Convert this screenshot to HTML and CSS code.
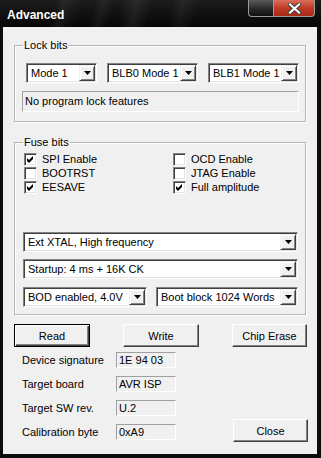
FILE: index.html
```html
<!DOCTYPE html>
<html lang="en">
<head>
    <meta charset="UTF-8">
    <title>Advanced</title>
    <link rel="stylesheet" href="styles.css">
</head>
<body>
    <div class="window">
        <div class="titlebar">
            <span class="title">Advanced</span>
            <div class="caption-buttons">
                <span class="cap-btn cap-blank"></span>
                <span class="cap-btn cap-close">
                    <svg width="13" height="11" viewBox="0 0 13 11">
                        <path d="M2 1.5 L11 9.5 M11 1.5 L2 9.5" stroke="#3a3a3a" stroke-width="4.2" stroke-linecap="square"/>
                        <path d="M2 1.5 L11 9.5 M11 1.5 L2 9.5" stroke="#fff" stroke-width="2.2" stroke-linecap="square"/>
                    </svg>
                </span>
            </div>
        </div>
        <div class="frame">
            <div class="client">
                <fieldset class="group lock-group">
                    <legend>Lock bits</legend>
                    <div class="combo-row lock-row">
                        <div class="combo w-mode"><span class="combo-text">Mode 1</span><span class="combo-arrow"><svg width="7" height="4"><polygon points="0,0 7,0 3.5,4" fill="#000"/></svg></span></div>
                        <div class="combo w-blb"><span class="combo-text">BLB0 Mode 1</span><span class="combo-arrow"><svg width="7" height="4"><polygon points="0,0 7,0 3.5,4" fill="#000"/></svg></span></div>
                        <div class="combo w-blb"><span class="combo-text">BLB1 Mode 1</span><span class="combo-arrow"><svg width="7" height="4"><polygon points="0,0 7,0 3.5,4" fill="#000"/></svg></span></div>
                    </div>
                    <div class="readonly info-box">No program lock features</div>
                </fieldset>

                <fieldset class="group fuse-group">
                    <legend>Fuse bits</legend>
                    <div class="check-grid">
                        <label class="check"><span class="box"><svg width="9" height="9"><polygon points="1,3 3,5 7,1 7,4 3,8 1,6" fill="#000"/></svg></span>SPI Enable</label>
                        <label class="check"><span class="box"></span>OCD Enable</label>
                        <label class="check"><span class="box"></span>BOOTRST</label>
                        <label class="check"><span class="box"></span>JTAG Enable</label>
                        <label class="check"><span class="box"><svg width="9" height="9"><polygon points="1,3 3,5 7,1 7,4 3,8 1,6" fill="#000"/></svg></span>EESAVE</label>
                        <label class="check"><span class="box"><svg width="9" height="9"><polygon points="1,3 3,5 7,1 7,4 3,8 1,6" fill="#000"/></svg></span>Full amplitude</label>
                    </div>
                    <div class="combo w-wide clock"><span class="combo-text">Ext XTAL, High frequency</span><span class="combo-arrow"><svg width="7" height="4"><polygon points="0,0 7,0 3.5,4" fill="#000"/></svg></span></div>
                    <div class="combo w-wide startup"><span class="combo-text">Startup: 4 ms + 16K CK</span><span class="combo-arrow"><svg width="7" height="4"><polygon points="0,0 7,0 3.5,4" fill="#000"/></svg></span></div>
                    <div class="combo-row bod-row">
                        <div class="combo w-bod"><span class="combo-text">BOD enabled, 4.0V</span><span class="combo-arrow"><svg width="7" height="4"><polygon points="0,0 7,0 3.5,4" fill="#000"/></svg></span></div>
                        <div class="combo w-boot"><span class="combo-text">Boot block 1024 Words</span><span class="combo-arrow"><svg width="7" height="4"><polygon points="0,0 7,0 3.5,4" fill="#000"/></svg></span></div>
                    </div>
                </fieldset>

                <div class="button-row">
                    <button type="button" class="btn btn-default">Read</button>
                    <button type="button" class="btn">Write</button>
                    <button type="button" class="btn btn-chip">Chip Erase</button>
                </div>

                <div class="info-section">
                    <div class="info-grid">
                        <span class="info-label">Device signature</span>
                        <span class="readonly field">1E 94 03</span>
                        <span class="info-label">Target board</span>
                        <span class="readonly field">AVR ISP</span>
                        <span class="info-label">Target SW rev.</span>
                        <span class="readonly field">U.2</span>
                        <span class="info-label">Calibration byte</span>
                        <span class="readonly field">0xA9</span>
                    </div>
                    <button type="button" class="btn btn-close">Close</button>
                </div>
            </div>
        </div>
    </div>
</body>
</html>
```

FILE: styles.css
```css
body {
    margin: 0;
    background-color: #000;
    font-family: "Liberation Sans", Arial, sans-serif;
    font-size: 11px;
    color: #000;
}
.window {
    width: 321px;
    height: 458px;
    display: flex;
    flex-direction: column;
    background-color: #0c0c0c;
}
.titlebar {
    height: 27px;
    display: flex;
    align-items: flex-start;
    background:
        linear-gradient(105deg, transparent 55px, rgba(255,255,255,0.06) 62px, transparent 80px, transparent 92px, rgba(255,255,255,0.05) 100px, transparent 112px),
        linear-gradient(100deg, transparent 120px, rgba(255,255,255,0.07) 135px, transparent 150px, transparent 170px, rgba(255,255,255,0.05) 180px, transparent 195px),
        linear-gradient(#1c1c1c, #060606);
}
.title {
    padding: 1px 0 0 7px;
    line-height: 28px;
    font-size: 12px;
    font-weight: bold;
    color: #fff;
}
.caption-buttons {
    margin-left: auto;
    margin-right: 6px;
    display: flex;
}
.cap-btn {
    height: 17px;
    box-sizing: border-box;
    border: 1px solid #9a9a9a;
    border-top: none;
}
.cap-blank {
    width: 25px;
    border-right: none;
    border-radius: 0 0 0 4px;
    background: linear-gradient(#5a5a5a, #2a2a2a 55%, #111);
}
.cap-close {
    width: 42px;
    border-radius: 0 0 4px 0;
    background: linear-gradient(#d8705c, #c03a24 50%, #a82a16);
    display: flex;
    align-items: center;
    justify-content: center;
}
.frame {
    flex: 1;
    padding: 0 4px 4px 3px;
    display: flex;
}
.client {
    flex: 1;
    background-color: #f0f0f0;
}
.group {
    margin: 0 0 0 11px;
    width: 292px;
    box-sizing: border-box;
    border: 1px solid #b4b4b4;
    box-shadow: inset 1px 1px 0 #fff, 1px 1px 0 #fff;
    min-width: 0;
}
.group legend {
    padding: 0 1px;
    line-height: 12px;
}
.lock-group {
    margin-top: 12px;
    padding: 12px 0 9px 8px;
}
.fuse-group {
    margin-top: 14px;
    padding: 4px 0 7px 9px;
}
.fuse-group legend {
    margin-left: -1px;
}
.combo-row {
    display: flex;
}
.lock-row {
    margin-left: 3px;
    gap: 10px;
}
.combo {
    height: 20px;
    box-sizing: border-box;
    display: flex;
    background-color: #fff;
    border: 1px solid;
    border-color: #828282 #fff #fff #828282;
    box-shadow: inset 1px 1px 0 #404040, inset -1px -1px 0 #e3e3e3;
    padding: 1px;
}
.combo-text {
    flex: 1;
    padding-left: 3px;
    line-height: 16px;
    white-space: nowrap;
    overflow: hidden;
}
.combo-arrow {
    width: 16px;
    height: 16px;
    box-sizing: border-box;
    background-color: #f0f0f0;
    border: 1px solid;
    border-color: #f0f0f0 #404040 #404040 #f0f0f0;
    box-shadow: inset 1px 1px 0 #fff, inset -1px -1px 0 #828282;
    display: flex;
    align-items: center;
    justify-content: center;
}
.combo-arrow svg {
    display: block;
}
.w-mode { width: 71px; }
.w-blb { width: 91px; }
.w-wide { width: 275px; margin-left: -1px; }
.w-bod { width: 124px; }
.w-boot { width: 142px; }
.readonly {
    box-sizing: border-box;
    border: 1px solid;
    border-color: #a0a0a0 #fff #fff #a0a0a0;
    padding-left: 2px;
    white-space: nowrap;
}
.info-box {
    margin: 8px 0 0 -1px;
    width: 277px;
    height: 21px;
    line-height: 19px;
}
.check-grid {
    display: grid;
    grid-template-columns: 149px auto;
    grid-auto-rows: 14px;
}
.check {
    display: flex;
    align-items: center;
    gap: 5px;
    line-height: 14px;
}
.box {
    width: 13px;
    height: 13px;
    box-sizing: border-box;
    background-color: #fff;
    border: 1px solid;
    border-color: #828282 #fff #fff #828282;
    box-shadow: inset 1px 1px 0 #404040, inset -1px -1px 0 #e3e3e3;
    display: flex;
    align-items: center;
    justify-content: center;
}
.box svg {
    display: block;
}
.clock {
    margin-top: 38px;
}
.startup {
    margin-top: 7px;
}
.bod-row {
    margin: 8px 0 0 -1px;
    gap: 9px;
}
.button-row {
    margin: 9px 0 0 11px;
    display: flex;
    gap: 33px;
}
.btn {
    width: 76px;
    height: 23px;
    box-sizing: border-box;
    padding: 0;
    font-family: inherit;
    font-size: 11px;
    color: #000;
    background-color: #f0f0f0;
    border: 1px solid;
    border-color: #fff #404040 #404040 #fff;
    box-shadow: inset -1px -1px 0 #828282;
}
.btn-default {
    border-color: #000;
    box-shadow: inset 1px 1px 0 #fff, inset -1px -1px 0 #404040, inset -2px -2px 0 #828282;
}
.btn-chip {
    width: 75px;
}
.info-section {
    margin: 5px 0 0 19px;
    display: flex;
}
.info-grid {
    display: grid;
    grid-template-columns: 94px 60px;
    grid-auto-rows: 16px;
    row-gap: 8px;
}
.info-label {
    line-height: 16px;
    white-space: nowrap;
}
.field {
    line-height: 14px;
}
.btn-close {
    width: 75px;
    align-self: flex-end;
    margin: 0 0 -2px 57px;
}
```
